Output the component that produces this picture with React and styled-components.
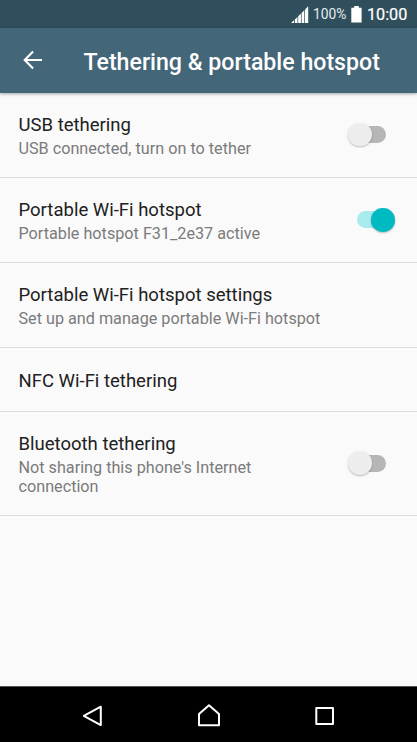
import React from "react";
import styled, { createGlobalStyle } from "styled-components";

const settings = [
  {
    title: "USB tethering",
    summary: "USB connected, turn on to tether",
    toggle: true,
    on: false,
  },
  {
    title: "Portable Wi-Fi hotspot",
    summary: "Portable hotspot F31_2e37 active",
    toggle: true,
    on: true,
  },
  {
    title: "Portable Wi-Fi hotspot settings",
    summary: "Set up and manage portable Wi-Fi hotspot",
  },
  { title: "NFC Wi-Fi tethering" },
  {
    title: "Bluetooth tethering",
    summary: "Not sharing this phone's Internet connection",
    toggle: true,
    on: false,
  },
];

function SignalIcon() {
  return (
    <svg width="18" height="18" viewBox="0 0 18 18" fill="#fff">
      <path d="M0 18L3 15.2V18Z" />
      <path d="M3.8 14.6L6.5 12V18H3.8Z" />
      <path d="M7.2 11.3L9.9 8.6V18H7.2Z" />
      <path d="M10.6 7.9L13.3 5.2V18H10.6Z" />
      <path d="M14 4.4L17.2 1.2V18H14Z" />
    </svg>
  );
}

function BatteryIcon() {
  return (
    <svg width="11" height="17" viewBox="0 0 11 17" fill="#fff">
      <path d="M3.2 0.1H7.8V1.8H10.6V16.6H0.3V1.8H3.2Z" />
    </svg>
  );
}

function BackIcon() {
  return (
    <svg width="20" height="20" viewBox="0 0 20 20" fill="none" stroke="#fff" strokeWidth="2.1">
      <path d="M19 10H1.8M10.1 1.6L1.7 10L10.1 18.4" />
    </svg>
  );
}

function SettingItem({ item }) {
  return (
    <SettingRow>
      <div className="text">
        <h2>{item.title}</h2>
        {item.summary && <p>{item.summary}</p>}
      </div>
      {item.toggle && (
        <Switch $on={item.on} role="switch" aria-checked={item.on} aria-label={item.title}>
          <span className="track" />
          <span className="thumb" />
        </Switch>
      )}
    </SettingRow>
  );
}

function App() {
  return (
    <Screen>
      <GlobalStyle />
      <StatusBar>
        <SignalIcon />
        <span className="percent">100%</span>
        <BatteryIcon />
        <span className="clock">10:00</span>
      </StatusBar>
      <Header>
        <button aria-label="Back">
          <BackIcon />
        </button>
        <h1>Tethering &amp; portable hotspot</h1>
      </Header>
      <SettingList>
        {settings.map((item) => (
          <SettingItem key={item.title} item={item} />
        ))}
      </SettingList>
      <NavBar>
        <button aria-label="Back">
          <svg width="24" height="24" viewBox="0 0 24 24">
            <path d="M19.8 2.7V21.1L2.8 11.9Z" />
          </svg>
        </button>
        <button aria-label="Home">
          <svg width="24" height="24" viewBox="0 0 24 24">
            <path d="M2 21.3V10L12 1.3L22 10V21.3Z" />
          </svg>
        </button>
        <button aria-label="Recent apps">
          <svg width="24" height="24" viewBox="0 0 24 24">
            <rect x="3.3" y="4" width="16.7" height="16" />
          </svg>
        </button>
      </NavBar>
    </Screen>
  );
}

const GlobalStyle = createGlobalStyle`
  * {
    box-sizing: border-box;
  }
  body {
    margin: 0;
    font-family: Roboto, "Liberation Sans", sans-serif;
  }
  h1, h2, p {
    margin: 0;
  }
  button {
    display: flex;
    align-items: center;
    justify-content: center;
    padding: 0;
    border: none;
    background: transparent;
  }
`;

const Screen = styled.div`
  display: flex;
  flex-direction: column;
  height: 100vh;
  overflow: hidden;
  background: #fafafa;
`;

const StatusBar = styled.div`
  display: flex;
  align-items: center;
  justify-content: flex-end;
  flex: none;
  height: 28px;
  padding-right: 9px;
  background: #304f5d;
  color: #fff;

  svg {
    flex: none;
  }
  .percent {
    width: 42px;
    padding-left: 4px;
    font-size: 13.8px;
    color: #e6edf0;
  }
  .clock {
    width: 46px;
    padding: 1px 0 0 5px;
    font-size: 16.2px;
    line-height: 20px;
    -webkit-text-stroke: 0.2px #fff;
  }
`;

const Header = styled.header`
  display: flex;
  align-items: center;
  flex: none;
  height: 64.6px;
  background: #446679;
  box-shadow: 0 1px 3px rgba(0, 0, 0, 0.35);
  z-index: 1;

  button {
    width: 65px;
    height: 64px;
  }
  h1 {
    padding: 5px 0 0 18.5px;
    font-size: 23.15px;
    line-height: 28px;
    font-weight: 500;
    color: #fff;
    white-space: nowrap;
  }
`;

const SettingList = styled.main`
  flex: 1;
`;

const SettingRow = styled.section`
  display: flex;
  align-items: center;
  justify-content: space-between;
  padding: 0 22.5px 0 18.5px;
  border-bottom: 1px solid #dcdcdc;

  .text {
    padding: 21.25px 0 19px;
  }
  h2 {
    font-size: 18.53px;
    line-height: 22px;
    font-weight: 400;
    color: #212121;
  }
  p {
    max-width: 310px;
    padding-top: 3px;
    font-size: 16.21px;
    line-height: 19px;
    color: #7b7b7b;
  }
`;

const Switch = styled.div`
  display: grid;
  grid-template-columns: 38px;
  align-items: center;
  flex: none;
  margin-left: 60px;
  margin-right: ${({ $on }) => ($on ? "0" : "8.5px")};

  .track,
  .thumb {
    grid-area: 1 / 1;
    justify-self: ${({ $on }) => ($on ? "end" : "start")};
  }
  .track {
    width: 29px;
    height: 17px;
    margin: ${({ $on }) => ($on ? "0 9px 0 0" : "0 0 0 9px")};
    border-radius: 9px;
    background: ${({ $on }) => ($on ? "#a8ebee" : "#b6b6b6")};
  }
  .thumb {
    width: 23.5px;
    height: 23.5px;
    border-radius: 50%;
    background: ${({ $on }) => ($on ? "#00bac2" : "#ededed")};
    box-shadow: 0 1px 2px rgba(0, 0, 0, 0.25);
  }
`;

const NavBar = styled.nav`
  display: flex;
  align-items: center;
  justify-content: center;
  gap: 92px;
  flex: none;
  height: 56px;
  padding-top: 2px;
  border-top: 1px solid #555;
  background: #000;

  svg {
    fill: none;
    stroke: #fff;
    stroke-width: 2;
    stroke-linejoin: round;
  }
`;

export default App;
